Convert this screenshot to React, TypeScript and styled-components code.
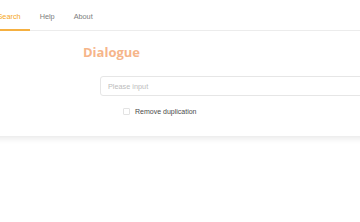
import React from "react";
import styled, { createGlobalStyle } from "styled-components";

const Global = createGlobalStyle`
  html, body { margin: 0; padding: 0; background: #ffffff; overflow: hidden; }
  body { font-family: "Liberation Sans", Arial, sans-serif; }
  #root { display: flex; justify-content: center; }
`;

const Page = styled.div`
  width: 384px;
  flex: none;
  padding-bottom: 20px;
`;

const Card = styled.div`
  background: #fff;
  box-shadow: 0 2px 7px rgba(0, 0, 0, 0.1);
  padding-bottom: 21px;
`;

const TabBar = styled.div`
  display: flex;
  border-bottom: 1px solid #ececec;
  height: 30px;
`;

const Tab = styled.div<{ $active?: boolean }>`
  padding: 0 9.5px;
  display: flex;
  align-items: center;
  font-size: 7.3px;
  color: ${(p) => (p.$active ? "#f5a623" : "#7d7d7d")};
  border-bottom: 2px solid ${(p) => (p.$active ? "#f5b041" : "transparent")};
  margin-bottom: -1px;
  padding-top: 3px;
`;

const Body = styled.div`
  padding: 12px 0 0 95px;
  display: flex;
  flex-direction: column;
`;

const Title = styled.h1`
  margin: 0;
  font-family: "Open Sans", "Noto Sans", sans-serif;
  font-weight: 700;
  font-size: 13px;
  line-height: 18px;
  color: #f6b58a;
`;

const Input = styled.input`
  margin: 15px 0 0 17px;
  width: 300px;
  height: 20px;
  box-sizing: border-box;
  border: 1px solid #e6e6e6;
  border-radius: 3px;
  padding: 0 7px;
  font-family: "Liberation Sans", Arial, sans-serif;
  font-size: 7.3px;
  color: #444;
  outline: none;
  &::placeholder { color: #bcbcbc; }
`;

const CheckRow = styled.label`
  display: flex;
  align-items: center;
  gap: 5px;
  margin: 12px 0 0 40px;
  font-size: 7px;
  color: #4a4a4a;
`;

const Box = styled.span`
  width: 7px;
  height: 7px;
  border: 1px solid #e3e3e3;
  border-radius: 1px;
  box-sizing: border-box;
`;

export default function App() {
  return (
    <>
      <Global />
      <Page>
        <Card>
          <TabBar>
            <Tab $active>Search</Tab>
            <Tab>Help</Tab>
            <Tab>About</Tab>
          </TabBar>
          <Body>
            <Title>Dialogue</Title>
            <Input placeholder="Please input" />
            <CheckRow>
              <Box />
              Remove duplication
            </CheckRow>
          </Body>
        </Card>
      </Page>
    </>
  );
}
